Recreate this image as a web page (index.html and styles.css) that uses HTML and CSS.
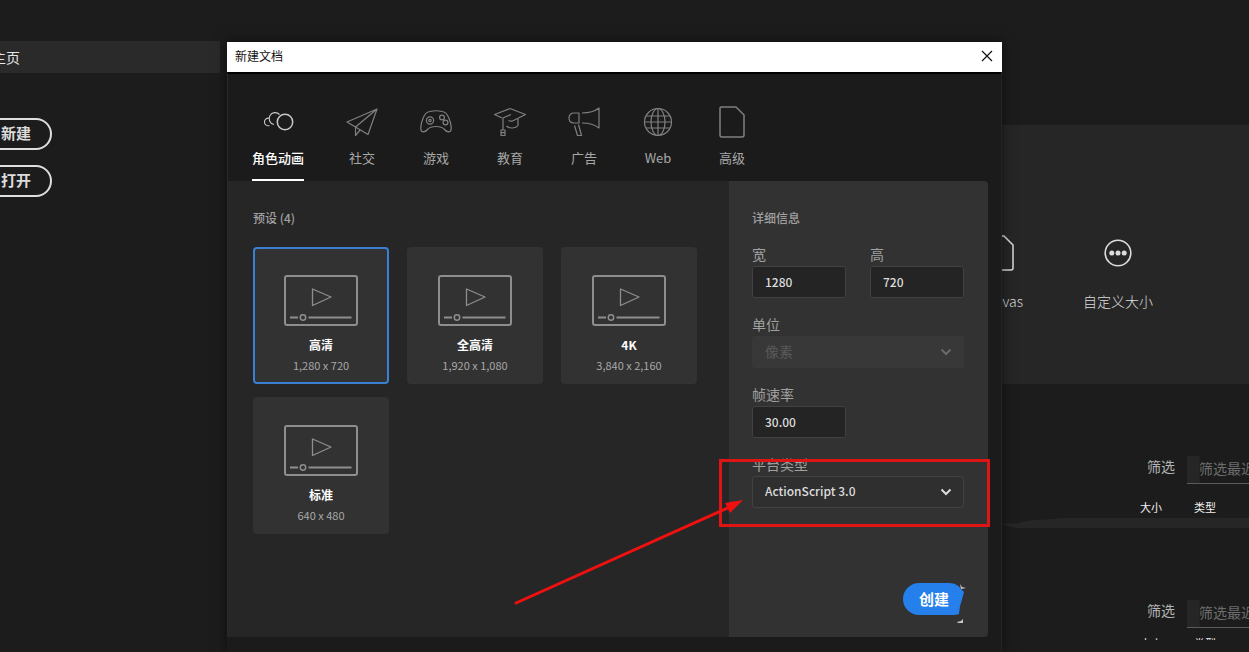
FILE: index.html
```html
<!DOCTYPE html>
<html lang="zh-CN">
<head>
<meta charset="utf-8">
<meta name="viewport" content="width=device-width, initial-scale=1">
<title>新建文档</title>
<link rel="stylesheet" href="styles.css">
</head>
<body>
<svg class="defs" aria-hidden="true">
  <symbol id="video" viewBox="0 0 74 52">
    <g fill="none" stroke="#8e8e8e">
      <rect x="1" y="1" width="72" height="49" rx="2" stroke-width="2"/>
      <path d="M28.500 14v16.500L47 22z" stroke-width="1.300" stroke-linejoin="round"/>
      <circle cx="19" cy="42.500" r="2.700" stroke-width="1.500"/>
      <path d="M6 42.500h8M24.500 42.500H67.500" stroke-width="2"/>
    </g>
  </symbol>
</svg>
<div class="app">
  <aside class="sidebar">
    <a class="home-link" href="#">主页</a>
    <div class="actions">
      <button class="pill" type="button">新建</button>
      <button class="pill" type="button">打开</button>
    </div>
  </aside>

  <main class="home">
    <section class="starters">
      <button class="starter" type="button">
        <svg width="28" height="36" viewBox="0 0 28 36" fill="none" stroke="#dcdcdc" stroke-width="1.500" stroke-linejoin="round"><path d="M3 1h15l9 9v23q0 2-2 2H3q-2 0-2-2V3q0-2 2-2z"/></svg>
        <span>Canvas</span>
      </button>
      <button class="starter" type="button">
        <svg width="28" height="36" viewBox="0 0 28 36"><circle cx="14" cy="18" r="12.800" fill="none" stroke="#dcdcdc" stroke-width="1.600"/><g fill="#dcdcdc"><circle cx="7.800" cy="18" r="2.500"/><circle cx="14" cy="18" r="2.500"/><circle cx="20.200" cy="18" r="2.500"/></g></svg>
        <span>自定义大小</span>
      </button>
    </section>
    <section class="recent">
      <div class="filter"><label for="f1">筛选</label><input id="f1" type="text" placeholder="筛选最近打开的文件"></div>
      <div class="heads"><span>大小</span><span>类型</span></div>
      <svg class="seam" viewBox="0 0 247 12" preserveAspectRatio="xMinYMin slice"><path d="M0 5.500H14L28 2.500 50 1 60 0H1300V10H14L0 6.500z" fill="#262626"/></svg>
    </section>
    <section class="recent">
      <div class="filter"><label for="f2">筛选</label><input id="f2" type="text" placeholder="筛选最近打开的文件"></div>
      <div class="heads heads-cut"><span>大小</span><span>类型</span></div>
    </section>
  </main>

  <div class="dialog" role="dialog" aria-labelledby="dlg-title">
    <header class="titlebar">
      <h1 id="dlg-title">新建文档</h1>
      <button class="close" type="button" aria-label="关闭"><svg width="12" height="12" viewBox="0 0 12 12" stroke="#111" stroke-width="1.200"><path d="M1 1l10 10M11 1L1 11"/></svg></button>
    </header>
    <nav class="tabs">
      <button class="tab active" type="button">
        <svg viewBox="0 0 32 32"><path d="M7.500 19.500A3.800 3.800 0 1 1 7 12.200" stroke-width="1.100"/><path d="M12 18.500A6 6 0 1 1 17.500 8.500" stroke-width="1.100"/><circle cx="23" cy="16" r="7.700" stroke-width="1.500"/></svg>
        <span>角色动画</span></button>
      <button class="tab" type="button">
        <svg viewBox="0 0 32 32"><path d="M31 3L1 16l8.500 5L22 28.500zM31 3L9.500 21v8.500l5-6"/></svg>
        <span>社交</span></button>
      <button class="tab" type="button">
        <svg viewBox="0 0 32 32"><path d="M10 5.500q6-1.500 12 0c6 0 9.500 12 9.200 17.500-.2 4-4.200 3.500-6.700.5C21 19.500 11 19.500 7.500 23.500 5 26.500 1 27 .8 23 .5 17.500 4 5.500 10 5.500z"/><circle cx="10" cy="14.500" r="3.600"/><circle cx="10" cy="14.500" r="1.200"/><circle cx="22" cy="11.500" r="2.400"/><circle cx="25.500" cy="16.500" r="2.400"/></svg>
        <span>游戏</span></button>
      <button class="tab" type="button">
        <svg viewBox="0 0 32 32"><path d="M16 2.500l15.500 6-13 6.500q-2 .6-4-.5M16 2.500L.5 8.500 8 12M17 8.500L9 12v12M12.500 20c3 3 9.500 2.500 11.500-.5V13M7 24h4v5.500H7zM7 26.700h4"/></svg>
        <span>教育</span></button>
      <button class="tab" type="button">
        <svg viewBox="0 0 32 32"><path d="M11 7H6C3 7 1 9 1 12s2 5 5 5h5zM14 7c6 0 12-1 17-5v20c-5-4-11-5-17-5M6.500 19.500l3 10h4l-3-11"/></svg>
        <span>广告</span></button>
      <button class="tab" type="button">
        <svg viewBox="0 0 32 32"><circle cx="16" cy="16" r="13.500"/><ellipse cx="16" cy="16" rx="7" ry="13.500"/><path d="M16 2.500v27M2.500 16h27M4 10h24M4 22h24"/></svg>
        <span>Web</span></button>
      <button class="tab" type="button">
        <svg viewBox="0 0 32 32"><path d="M5 1h15l8 8v20q0 2-2 2H6q-2 0-2-2V2.500Q4 1 5 1z" stroke-width="1.500"/></svg>
        <span>高级</span></button>
    </nav>
    <div class="panes">
      <section class="presets">
        <h2>预设 (4)</h2>
        <div class="cards">
          <button class="card selected" type="button"><svg><use href="#video"/></svg><strong>高清</strong><span>1,280 x 720</span></button>
          <button class="card" type="button"><svg><use href="#video"/></svg><strong>全高清</strong><span>1,920 x 1,080</span></button>
          <button class="card" type="button"><svg><use href="#video"/></svg><strong>4K</strong><span>3,840 x 2,160</span></button>
          <button class="card" type="button"><svg><use href="#video"/></svg><strong>标准</strong><span>640 x 480</span></button>
        </div>
      </section>
      <form class="details">
        <h2>详细信息</h2>
        <div class="fields">
          <div class="field"><label for="w">宽</label><input id="w" type="text" value="1280"></div>
          <div class="field"><label for="h">高</label><input id="h" type="text" value="720"></div>
          <div class="field wide"><label for="unit">单位</label>
            <div class="pick"><select id="unit" disabled><option>像素</option></select><svg viewBox="0 0 12 8"><path d="M1.500 1.500L6 6l4.500-4.500"/></svg></div></div>
          <div class="field"><label for="fps">帧速率</label><input id="fps" type="text" value="30.00"></div>
          <div class="field wide"><label for="platform">平台类型</label>
            <div class="pick"><select id="platform"><option>ActionScript 3.0</option></select><svg viewBox="0 0 12 8"><path d="M1.500 1.500L6 6l4.500-4.500"/></svg></div></div>
        </div>
        <button class="create" type="button">
          <svg width="66" height="42" viewBox="0 0 66 42"><path d="M16 0H46C52 0 56 3 58 6L61 9Q59 17 57 23L56 31Q54 32 50 32H16A16 16 0 0 1 16 0z" fill="#2680eb"/><path d="M57 1l2 3 4 1-5 1zM54 39l4-1 2-2v4h-5z" fill="#c8c8c8"/></svg>
          <span>创建</span>
        </button>
        <svg class="callout" width="484" height="156" viewBox="0 0 484 156"><rect x="210.500" y="5.500" width="268" height="65" fill="none" stroke="#e01414" stroke-width="3"/><path d="M6 148L222 51" stroke="#f01010" stroke-width="3" stroke-linecap="round"/><path d="M233 45L215 48 220 58z" fill="#f01010"/></svg>
      </form>
    </div>
  </div>
</div>
</body>
</html>
```
FILE: styles.css
```css
* { box-sizing: border-box; }
body {
  margin: 0;
  background: #1c1c1c;
  color: #dcdcdc;
  font-family: "Noto Sans CJK SC", "Noto Sans", sans-serif;
  font-size: 14px;
  line-height: 20px;
}
button, input, select { font: inherit; color: inherit; margin: 0; }
button { border: 0; background: none; padding: 0; }
h1, h2 { margin: 0; font-size: 12px; }
.defs { position: absolute; width: 0; height: 0; }

.app {
  position: relative;
  display: grid;
  grid-template-columns: 220px minmax(0, 1fr);
  min-height: 100vh;
  overflow: hidden;
}

/* Left rail */
.sidebar { padding-top: 41px; }
.home-link {
  display: block;
  padding: 6px 0;
  background: #2a2a2a;
  color: #e6e6e6;
  text-decoration: none;
  text-indent: -8px;
}
.actions {
  display: flex;
  flex-direction: column;
  align-items: flex-start;
  gap: 15px;
  margin: 45px 0 0 -20px;
}
.pill {
  width: 72px;
  height: 32px;
  padding-bottom: 3px;
  border: 2px solid #dedede;
  border-radius: 16px;
  font-size: 15px;
  font-weight: 700;
  line-height: 20px;
}

/* Start page behind the dialog */
.home { padding-top: 125px; overflow: hidden; }
.starters {
  display: flex;
  justify-content: flex-end;
  gap: 60px;
  margin-left: 20px;
  padding: 110px 96px 73px;
  background: #262626;
}
.starter {
  display: flex;
  flex-direction: column;
  align-items: center;
  gap: 20px;
  font-weight: 300;
}
.recent { margin-top: 72px; }
.filter {
  display: flex;
  justify-content: flex-end;
  gap: 12px;
  margin-right: -98px;
}
.filter label { color: #b4b4b4; }
.filter input {
  width: 160px;
  height: 28px;
  padding: 0 12px 4px;
  border: 0;
  border-bottom: 1px solid #5a5a5a;
  background: linear-gradient(90deg, #262626 12px, #1c1c1c 13px);
}
.filter input::placeholder { color: #6e6e6e; opacity: 1; }
.heads {
  display: flex;
  justify-content: flex-end;
  gap: 32px;
  margin: 15px 33px 0 0;
  font-size: 11px;
  line-height: 16px;
  color: #f0f0f0;
}
.seam { display: block; height: 12px; width: 247px; margin: 3px 0 0 auto; }
.recent + .recent { margin-top: 70px; }
.heads-cut { height: 5px; margin-top: 7px; overflow: hidden; }

/* Dialog */
.dialog {
  position: absolute;
  top: 42px;
  right: 247px;
  bottom: 0;
  left: 227px;
  display: flex;
  flex-direction: column;
  padding-bottom: 15px;
  background: #1b1b1b;
  border-right: 1px solid #242424;
  box-shadow: 0 0 12px #0008;
}
.titlebar {
  display: flex;
  justify-content: space-between;
  align-items: center;
  height: 30px;
  margin-right: -1px;
  padding: 0 9px 2px 8px;
  background: #fff;
  color: #111;
}
.titlebar h1 { font-weight: 400; }
.close { display: flex; }
.tabs {
  display: flex;
  gap: 42px;
  padding: 32px 24px 0;
  border-top: 2px solid #000;
  border-left: 1px solid #2a2a2a;
}
.tab {
  display: flex;
  flex-direction: column;
  align-items: center;
  gap: 10px;
  min-width: 32px;
  padding-bottom: 11px;
  border-bottom: 2px solid transparent;
  color: #a8a8a8;
  font-size: 13px;
  line-height: 20px;
}
.tab svg {
  width: 32px;
  height: 32px;
  fill: none;
  stroke: #808080;
  stroke-width: 1.2;
  stroke-linejoin: round;
}
.tab.active { color: #fff; border-color: #fff; font-weight: 500; }
.tab.active svg { stroke: #c8c8c8; }

.panes {
  flex: 1;
  display: flex;
  margin-right: 13px;
  border-left: 1px solid #2a2a2a;
}
.panes h2 { color: #a0a0a0; line-height: 20px; font-weight: 500; }
.presets { flex: 1; padding: 27px 25px 0; background: #262626; }
.cards {
  display: grid;
  grid-template-columns: repeat(auto-fill, 136px);
  gap: 13px 18px;
  margin: 19px -10px 0 0;
}
.card {
  display: flex;
  flex-direction: column;
  align-items: center;
  height: 137px;
  padding-top: 26px;
  border: 2px solid transparent;
  border-radius: 4px;
  background: #323232 border-box;
  font-size: 12px;
  line-height: 20px;
}
.card.selected { border-color: #3a80d2; }
.card svg { width: 74px; height: 52px; margin-bottom: 8px; }
.card strong { color: #fff; font-weight: 700; }
.card span { color: #a8a8a8; font-size: 11px; }

.details {
  position: relative;
  display: flex;
  flex-direction: column;
  width: 259px;
  padding: 27px 23px 22px;
  background: #323232;
  border-radius: 0 4px 4px 0;
}
.fields {
  display: grid;
  grid-template-columns: 94px 94px;
  gap: 16px 24px;
  margin-top: 16px;
}
.field { min-width: 0; }
.wide { grid-column: span 2; }
.field label { display: block; margin-bottom: 2px; color: #a0a0a0; line-height: 20px; }
.field input, .pick select {
  display: block;
  width: 100%;
  height: 32px;
  padding: 0 12px 2px;
  border: 1px solid #414141;
  border-radius: 3px;
  background: #242424;
  color: #dcdcdc;
  font-size: 12px;
  font-weight: 500;
}
.pick { position: relative; }
.pick select { appearance: none; background: #2f2f2f; opacity: 1; }
.pick select:disabled { background: #383838; border-color: #383838; color: #5a5a5a; font-size: 14px; font-weight: 400; }
.pick svg {
  position: absolute;
  top: 12px;
  right: 12px;
  width: 12px;
  height: 8px;
  fill: none;
  stroke: #dcdcdc;
  stroke-width: 2;
  pointer-events: none;
}
.pick select:disabled + svg { stroke: #6a6a6a; }
.create {
  position: relative;
  align-self: flex-end;
  width: 62px;
  height: 32px;
  margin-top: auto;
  color: #fff;
  font-size: 15px;
  font-weight: 700;
  line-height: 20px;
}
.create svg { position: absolute; top: 0; left: 0; }
.create span { position: relative; }
.callout { position: absolute; top: 274px; left: -219px; pointer-events: none; }
```
